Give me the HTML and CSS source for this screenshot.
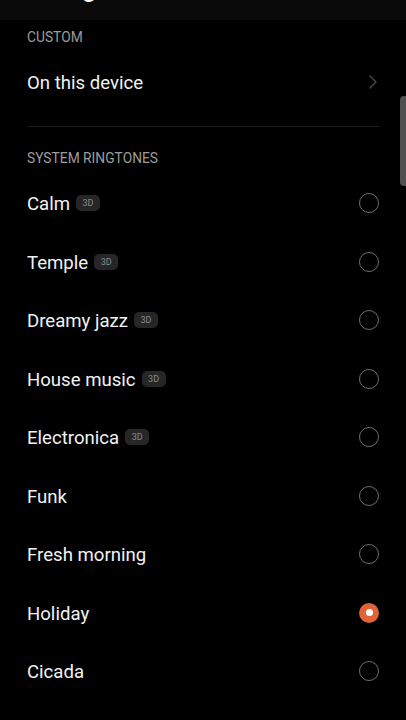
FILE: index.html
```html
<!DOCTYPE html>
<html lang="en">
<head>
    <meta charset="UTF-8">
    <meta name="viewport" content="width=device-width, initial-scale=1.0">
    <title>Ringtone</title>
    <link rel="stylesheet" href="styles.css">
</head>
<body>
    <div class="top_bar">
        <div class="top_bar__title">Ringtone</div>
    </div>

    <div class="list">
        <div class="section_label">Custom</div>
        <div class="row row--link">
            <span class="row__name">On this device</span>
            <svg class="chevron" width="10" height="16" viewBox="0 0 10 16">
                <polyline points="2,2 8,8 2,14" fill="none" stroke="#4a4a4a" stroke-width="1.4" stroke-linecap="round" stroke-linejoin="round" />
            </svg>
        </div>
        <div class="divider"></div>

        <div class="section_label section_label--spaced">System ringtones</div>

        <div class="row">
            <span class="row__name">Calm</span><span class="badge">3D</span>
            <span class="radio"></span>
        </div>
        <div class="row">
            <span class="row__name">Temple</span><span class="badge">3D</span>
            <span class="radio"></span>
        </div>
        <div class="row">
            <span class="row__name">Dreamy jazz</span><span class="badge">3D</span>
            <span class="radio"></span>
        </div>
        <div class="row">
            <span class="row__name">House music</span><span class="badge">3D</span>
            <span class="radio"></span>
        </div>
        <div class="row">
            <span class="row__name">Electronica</span><span class="badge">3D</span>
            <span class="radio"></span>
        </div>
        <div class="row">
            <span class="row__name">Funk</span>
            <span class="radio"></span>
        </div>
        <div class="row">
            <span class="row__name">Fresh morning</span>
            <span class="radio"></span>
        </div>
        <div class="row">
            <span class="row__name">Holiday</span>
            <span class="radio radio--checked"></span>
        </div>
        <div class="row">
            <span class="row__name">Cicada</span>
            <span class="radio"></span>
        </div>
        <div class="row">
            <span class="radio"></span>
        </div>
    </div>

    <div class="scrollbar"></div>
</body>
</html>
```

FILE: styles.css
```css
*{
    margin: 0;
    padding: 0;
    box-sizing: border-box;
}
html{
    background: #000000;
    font-family: 'Roboto', 'Noto Sans', sans-serif;
}
body{
    width: 406px;
    height: 720px;
    overflow: hidden;
    background: #000000;
    color: #ffffff;
}
.top_bar {
    height: 20px;
    background: #0a0a0a;
    overflow: hidden;
    padding-left: 45px;
}
.top_bar__title {
    font-size: 26px;
    line-height: 26px;
    margin-top: -25px;
    color: #ffffff;
}
.list {
    padding: 0 27px;
}
.section_label {
    font-size: 13.8px;
    line-height: 34px;
    color: #9c9c9c;
    text-transform: uppercase;
}
.section_label--spaced {
    padding-top: 15px;
    line-height: 32px;
}
.row {
    display: flex;
    align-items: center;
    height: 58.5px;
}
.row--link {
    height: 56px;
    justify-content: space-between;
}
.row__name {
    font-size: 18.6px;
    padding-top: 2px;
    color: #f2f2f2;
}
.chevron {
    margin-right: 1px;
}
.divider {
    height: 1px;
    margin-top: 16px;
    background: #1e1e1e;
}
.badge {
    margin-left: 6px;
    width: 24px;
    height: 16px;
    border-radius: 5px;
    background: #262626;
    color: #8a8a8a;
    font-size: 9px;
    line-height: 16px;
    text-align: center;
}
.radio {
    margin-left: auto;
    width: 20px;
    height: 20px;
    border-radius: 50%;
    border: 1.3px solid #6e6e6e;
}
.radio--checked {
    border: none;
    background: #e0643a;
    position: relative;
}
.radio--checked::after {
    content: "";
    position: absolute;
    left: 6.5px;
    top: 6.5px;
    width: 7px;
    height: 7px;
    border-radius: 50%;
    background: #ffffff;
}
.scrollbar {
    position: absolute;
    right: 0;
    top: 96px;
    width: 6px;
    height: 90px;
    background: #505050;
    border-radius: 4px 0 0 4px;
}
```
